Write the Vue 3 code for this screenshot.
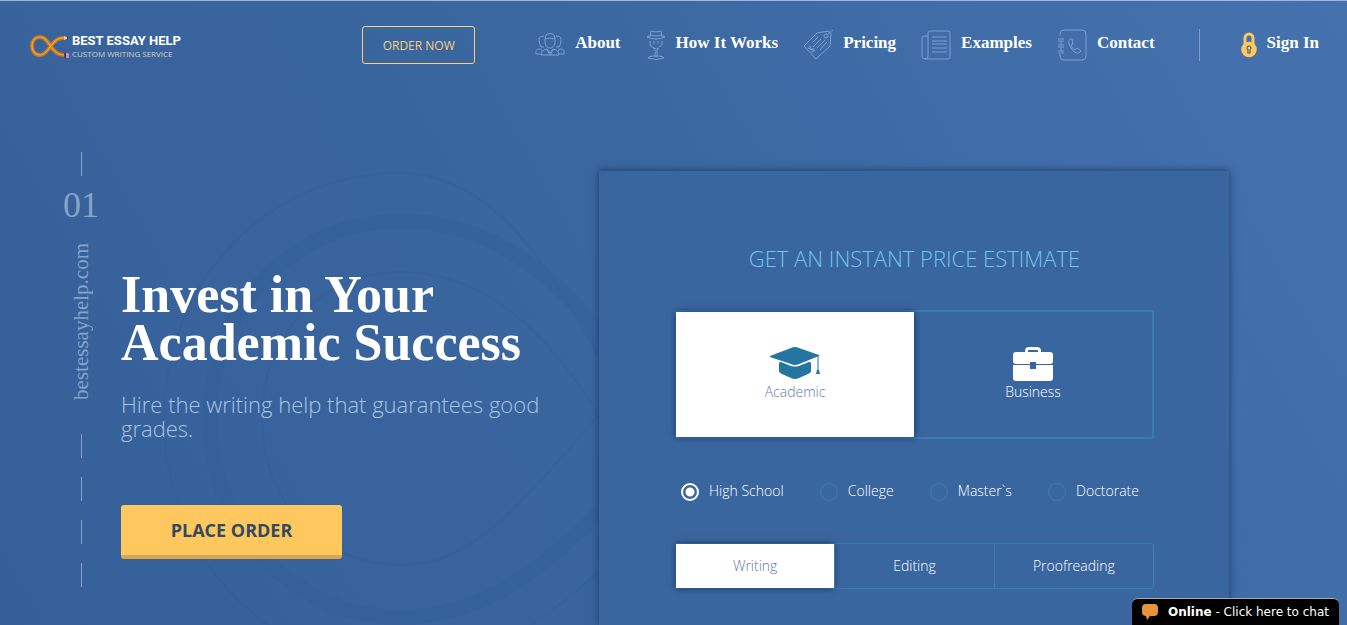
<template>
  <div class="page">
    <svg class="backdrop" viewBox="0 0 1347 625" preserveAspectRatio="xMinYMin slice" aria-hidden="true">
      <g fill="none" stroke="#2f5a95">
        <path
          d="M850 660 C760 610 690 530 620 400 C545 240 480 172 400 172 C265 172 164 282 164 417 C164 555 265 664 400 664 C490 664 560 610 620 550"
          stroke-width="2" opacity="0.2" />
        <path
          d="M850 610 C700 540 625 400 590 320 C530 248 465 220 400 220 C295 220 210 305 210 417 C210 530 295 616 400 616 C500 616 565 545 620 490"
          stroke-width="15" opacity="0.18" />
        <path
          d="M590 400 C530 310 470 271 400 271 C325 271 262 330 262 417 C262 505 325 564 400 564 C470 564 515 510 590 424 C600 414 600 410 590 400Z"
          stroke-width="2" opacity="0.2" />
      </g>
    </svg>

    <header class="header">
      <a class="logo" href="#">
        <svg width="39" height="24" viewBox="0 0 39 24" aria-hidden="true">
          <g fill="none">
            <path d="M35 4 C27 3 24 8 20 13 C16 19 13 21 10 21 C5 21 2 17 2 12 C2 7 5 3 10 3 C15 3 18 8 21 13 C25 18 28 21 34 21" stroke="#c77a1c" stroke-width="4" />
            <path d="M35 4 C27 3 24 8 20 13 C16 19 13 21 10 21 C5 21 2 17 2 12 C2 7 5 3 10 3 C15 3 18 8 21 13 C25 18 28 21 34 21" stroke="#e9a94c" stroke-width="1.2" />
          </g>
          <path d="M34 2l5 2-5 2z" fill="#e8cfa0" />
          <path d="M37 3l2 1-2 1z" fill="#222" />
          <path d="M34 19h2v5h-2z" fill="#4b3d55" />
          <rect x="36" y="19" width="3" height="5" rx="1" fill="#d287cf" />
        </svg>
        <span class="logo-text">
          <span class="logo-name">BEST ESSAY HELP</span>
          <span class="logo-sub">CUSTOM WRITING SERVICE</span>
        </span>
      </a>

      <button class="order-now" type="button">ORDER NOW</button>

      <nav class="nav">
        <a v-for="item in navItems" :key="item.label" class="nav-link" href="#">
          <svg :width="item.width" height="32" :viewBox="`0 0 ${item.width} 32`" aria-hidden="true">
            <path v-for="d in item.paths" :key="d" :d="d" />
          </svg>
          <span>{{ item.label }}</span>
        </a>
      </nav>

      <a class="nav-link sign-in" href="#">
        <svg width="16" height="26" viewBox="0 0 16 26" aria-hidden="true">
          <path d="M4 12V6a4 4 0 0 1 8 0v6" fill="none" stroke="#ffc85f" stroke-width="3" />
          <circle cx="8" cy="17.5" r="7.8" fill="#ffc85f" />
          <path d="M8 14a2 2 0 0 0-1 3.7V21h2v-3.3A2 2 0 0 0 8 14z" fill="none" stroke="#4c6383" stroke-width="1.2" />
        </svg>
        <span>Sign In</span>
      </a>
    </header>

    <main class="hero">
      <aside class="rail">
        <i class="dash"></i>
        <span class="rail-number">01</span>
        <span class="rail-site">bestessayhelp.com</span>
        <i class="dash"></i>
        <i class="dash"></i>
        <i class="dash"></i>
        <i class="dash"></i>
      </aside>

      <section class="intro">
        <h1>Invest in Your<br />Academic Success</h1>
        <p>Hire the writing help that guarantees good grades.</p>
        <button class="place-order" type="button">PLACE ORDER</button>
      </section>

      <form class="estimate" @submit.prevent>
        <h2>GET AN INSTANT PRICE ESTIMATE</h2>

        <div class="kinds">
          <button type="button" class="kind" :class="{ active: kind === 'academic' }" @click="kind = 'academic'">
            <svg width="52" height="34" viewBox="0 2 52 34" aria-hidden="true">
              <path d="M1 11 22 3q4-2 8 0l20 7q1 1 0 1L30 19q-4 2-8 0L1 12z" fill="currentColor" />
              <path d="M10 18q0-1 2-1l10 4q4 1 8 0l10-4q2 0 2 1v8q0 2-3 3l-9 4q-4 2-8 0l-9-4q-3-1-3-3z" fill="currentColor" />
              <path d="M49 11v16" stroke="currentColor" />
              <path d="M48 25h2l1 4h-4z" fill="currentColor" />
            </svg>
            <span>Academic</span>
          </button>
          <button type="button" class="kind" :class="{ active: kind === 'business' }" @click="kind = 'business'">
            <svg width="40" height="34" viewBox="0 0 40 34" aria-hidden="true">
              <path d="M12 6V4q0-4 4-4h8q4 0 4 4v2h-3V4q0-1-1-1h-8q-1 0-1 1v2z" fill="currentColor" />
              <path d="M3 5h34q3 0 3 3v6q0 3-3 3H23v-2h-6v2H3q-3 0-3-3V8q0-3 3-3z" fill="currentColor" />
              <path d="M0 18h17v4h6v-4h17v13q0 3-3 3H3q-3 0-3-3z" fill="currentColor" />
            </svg>
            <span>Business</span>
          </button>
        </div>

        <div class="levels">
          <label v-for="name in levels" :key="name" class="level">
            <input v-model="level" type="radio" name="level" :value="name" />
            <span>{{ name }}</span>
          </label>
        </div>

        <div class="tabs">
          <button
            v-for="name in services"
            :key="name"
            type="button"
            class="tab"
            :class="{ active: service === name }"
            @click="service = name"
          >
            {{ name }}
          </button>
        </div>
      </form>
    </main>

    <button class="chat" type="button">
      <svg width="16" height="16" viewBox="0 0 16 16" aria-hidden="true">
        <path d="M4 0h8q4 0 4 4v4q0 4-4 4H8l-3 4-1-4q-4 0-4-4V4q0-4 4-4z" fill="#e8923c" />
      </svg>
      <span><b>Online</b> - Click here to chat</span>
    </button>
  </div>
</template>

<script setup>
import { ref } from "vue";

const kind = ref("academic");
const level = ref("High School");
const service = ref("Writing");

const levels = ["High School", "College", "Master`s", "Doctorate"];
const services = ["Writing", "Editing", "Proofreading"];

const navItems = [
  {
    label: "About",
    width: 30,
    paths: [
      "M10 10q0-4 2-5 3-1 6 0 2 1 2 5v4q-1 5-5 5t-5-5z",
      "M10 10q5-2 10 0",
      "M9 18H6q-2-3-2-7V9q1-2 5-2M21 18h3q2-3 2-7V9q-1-2-5-2",
      "M1 25q-1-5 3-5 2-1 3 2M29 25q1-5-3-5-2-1-3 2",
      "M6 26q0-5 6-6l3 4 3-4q6 1 6 6M1 25h5M24 25h5M6 26h18",
      "M12 21l3 5 3-5",
    ],
  },
  {
    label: "How It Works",
    width: 20,
    paths: [
      "M4 8l1-6q5 2 10 0l1 6M4 6q6 2 12 0",
      "M1 8q0-1 3-1M16 7q3 0 3 1-9 4-18 0",
      "M4 12v3q0 3 4 4M16 12v3q0 2-3 3M8 12v3M12 12v3",
      "M7 19q4 2 6 0M8 21q5 2 3 4v3M12 20q-1 3-3 4v4",
      "M2 29q0-2 8-2t8 2q-8 3-16 0z",
    ],
  },
  {
    label: "Pricing",
    width: 30,
    paths: [
      "M1 17 14 4l12-2 2 3-1 12-14 13z",
      "M25 5l5-4M21 7a2 2 0 1 0 4 0 2 2 0 1 0-4 0",
      "M10 13l5-5M10 18l8-8M14 19l8-8M17 21l7-8",
      "M6 17q2 0 1 2t2 1q2-1 2 1t-3 2M5 19l7 3",
    ],
  },
  {
    label: "Examples",
    width: 30,
    paths: [
      "M7 4q0-2 2-2h18q2 0 2 2v24q0 2-2 2H4q-3 0-3-3V9q0-2 2-2h4",
      "M7 4v23q0 3-3 3",
      "M11 8h15M11 12h15M11 15h15M11 19h15M11 23h15",
    ],
  },
  {
    label: "Contact",
    width: 30,
    paths: [
      "M3 7V5q0-4 4-4h18q4 0 4 4v22q0 4-4 4H7q-4 0-4-4v-2",
      "M1 10h6M1 12h6M1 16h6M1 18h6M1 22h6M1 24h6M4 12v4M4 18v4",
      "M13 10q-3 3 1 9 4 6 8 5l2-2-4-3-2 2q-3-1-4-5l2-1-1-5z",
    ],
  },
];
</script>

<style>
body {
  margin: 0;
}
</style>

<style scoped>
.page {
  position: relative;
  box-sizing: border-box;
  min-height: 100vh;
  display: flex;
  flex-direction: column;
  overflow: hidden;
  border-top: 1px solid #9cb8dc;
  background: linear-gradient(60deg, #355f98 0%, #3a669f 45%, #4572ae 100%);
  color: #fff;
  font-family: "Open Sans", sans-serif;
}

.page button {
  font-family: inherit;
  cursor: pointer;
}

.backdrop {
  position: absolute;
  top: 0;
  left: 0;
  width: 100%;
  height: 100%;
}

.header {
  position: relative;
  display: flex;
  align-items: center;
  padding: 0 28px 0 30px;
  height: 88px;
}

.logo {
  display: flex;
  align-items: center;
  gap: 3px;
  padding-top: 2px;
  color: #fff;
  text-decoration: none;
}

.logo-text {
  display: flex;
  flex-direction: column;
  white-space: nowrap;
}

.logo-name {
  font: bold 13px/14px Roboto, sans-serif;
}

.logo-sub {
  font-size: 8px;
  line-height: 11px;
  color: #d9cfc0;
}

.order-now {
  margin: 0 60px 0 auto;
  width: 113px;
  height: 38px;
  padding: 0;
  border: 1px solid #ffcf75;
  border-radius: 3px;
  background: transparent;
  color: #f3d080;
  font-size: 12px;
}

.nav {
  display: flex;
  gap: 25px;
  padding-right: 44px;
  border-right: 1px solid #7f9fca;
}

.nav-link {
  display: flex;
  align-items: center;
  gap: 10px;
  color: #fff;
  text-decoration: none;
  white-space: nowrap;
  font: bold 17px/28px "Liberation Serif", serif;
}

.nav-link span {
  padding-bottom: 4px;
}

.nav .nav-link svg {
  fill: none;
  stroke: #7b9fd0;
  stroke-width: 1;
}

.sign-in {
  margin-left: 41px;
}

.hero {
  position: relative;
  flex: 1;
  display: grid;
  grid-template-columns: 80px minmax(0, 1fr) minmax(0, 630px);
  padding: 0 118px 0 41px;
}

.rail {
  display: flex;
  flex-direction: column;
  align-items: center;
  padding-top: 63px;
  color: #86a3ca;
  font-family: "Liberation Serif", serif;
}

.dash {
  width: 1px;
  height: 24px;
  margin-bottom: 19px;
  background: #86a3ca;
}

.rail-number {
  margin-top: -10px;
  font-size: 36px;
  line-height: 40px;
}

.rail-site {
  margin: 18px 0 34px;
  writing-mode: vertical-rl;
  transform: rotate(180deg);
  font-size: 21px;
  line-height: 24px;
}

.intro {
  padding: 182px 32px 60px 0;
}

.intro h1 {
  margin: 0;
  font: bold 52px/48px "Liberation Serif", serif;
  white-space: nowrap;
}

.intro p {
  margin: 25px 0 65px;
  color: #a9c3e6;
  font-size: 22px;
  font-weight: 300;
  line-height: 24px;
}

.place-order {
  width: 221px;
  height: 54px;
  padding: 0;
  border: 0;
  border-bottom: 4px solid #d9a650;
  border-radius: 3px;
  background: #ffc85f;
  color: #34495f;
  font-size: 18px;
  font-weight: 700;
}

.estimate {
  margin-top: 82px;
  padding: 71px 75px 36px 76px;
  background: #3a669f;
  box-shadow: 0 0 8px rgba(10, 35, 75, 0.7);
}

.estimate h2 {
  margin: 0 0 36px;
  color: #72c5ef;
  font-size: 22px;
  font-weight: 300;
  line-height: 32px;
  text-align: center;
}

.kinds {
  display: flex;
  box-sizing: border-box;
  height: 129px;
  border: 2px solid #3b7db3;
  border-left-width: 1px;
  border-radius: 3px;
}

.kind {
  flex: 1;
  display: flex;
  flex-direction: column;
  align-items: center;
  justify-content: center;
  padding: 0;
  border: 0;
  background: transparent;
  color: #fff;
  font-size: 14px;
  font-weight: 300;
  line-height: 22px;
}

.kind.active,
.tab.active {
  background: #fff;
  box-shadow: 0 0 7px rgba(10, 35, 75, 0.8);
}

.kind.active {
  color: #24759f;
}

.kind.active span,
.tab.active {
  color: #6079ae;
}

.levels {
  display: flex;
  justify-content: space-between;
  margin: 42px 15px 42px 6px;
}

.level {
  display: flex;
  align-items: center;
  gap: 10px;
  font-size: 14px;
  font-weight: 300;
  line-height: 20px;
}

.level input {
  appearance: none;
  box-sizing: border-box;
  width: 18px;
  height: 18px;
  margin: 2px 0 0;
  border: 1px solid #3b7db3;
  border-radius: 50%;
}

.level input:checked {
  border: 2px solid #fff;
  background: radial-gradient(circle, #fff 4px, transparent 5px);
}

.tabs {
  display: flex;
  box-sizing: border-box;
  height: 46px;
  border: 1px solid #3b7db3;
  border-radius: 3px;
}

.tab {
  flex: 1;
  padding: 0 0 2px;
  border: 0;
  background: transparent;
  color: #fff;
  font-size: 14px;
  font-weight: 300;
}

.tab + .tab {
  border-left: 1px solid #3b7db3;
}

.chat {
  position: fixed;
  right: 8px;
  bottom: 0;
  display: flex;
  align-items: center;
  gap: 10px;
  height: 27px;
  padding: 0 10px;
  border: 0;
  border-top: 1px solid #aaa;
  border-radius: 6px 6px 0 0;
  background: #000;
  color: #fff;
  font-size: 12px;
}

.page .chat {
  font-family: "DejaVu Sans", sans-serif;
}
</style>
